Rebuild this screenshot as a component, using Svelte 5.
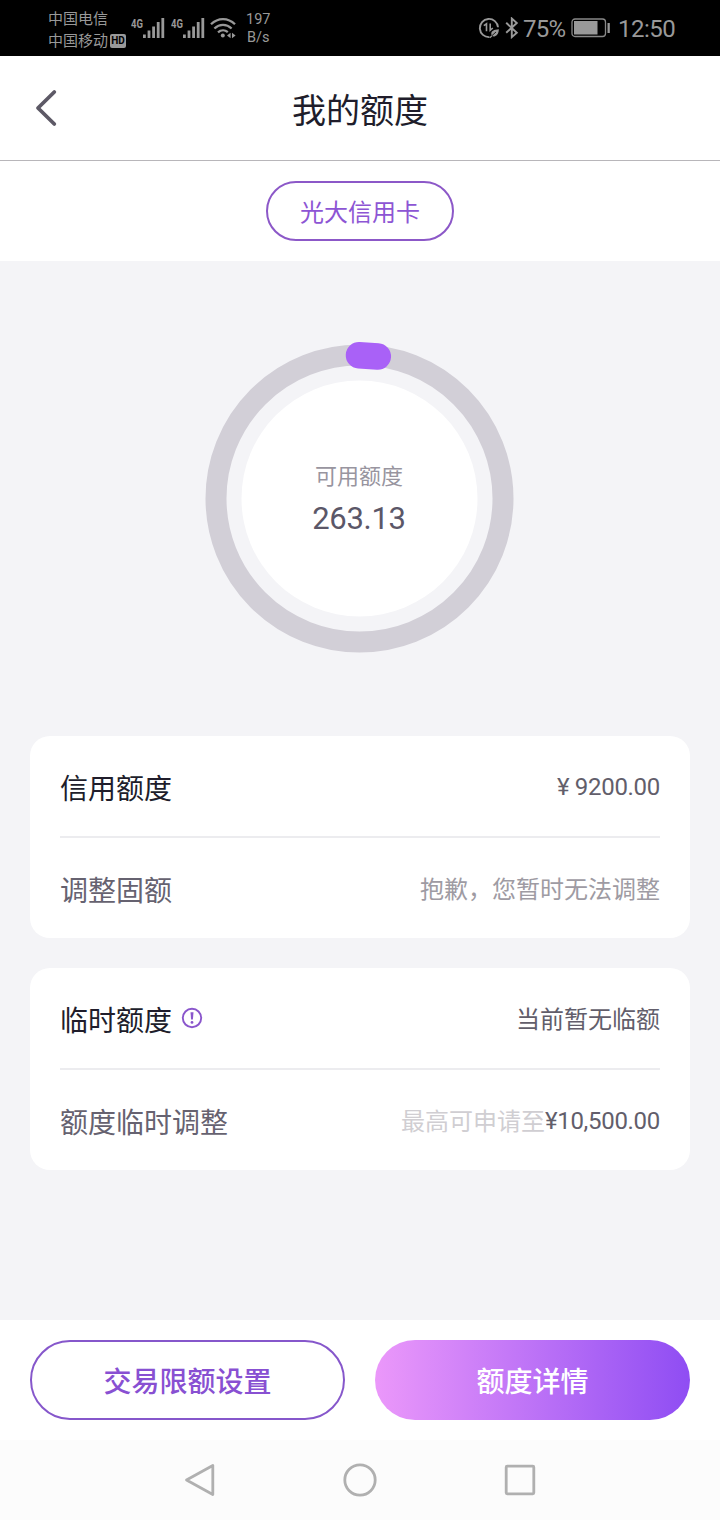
<script>
  const groups = [
    [
      { label: '信用额度', strong: true, value: '¥ 9200.00', numeric: true },
      { label: '调整固额', value: '抱歉，您暂时无法调整', tone: 'muted' }
    ],
    [
      { label: '临时额度', strong: true, info: true, value: '当前暂无临额' },
      { label: '额度临时调整', hint: '最高可申请至', value: '¥10,500.00', numeric: true }
    ]
  ];
  const sims = [0, 1];
</script>

<div class="screen">
  <div class="status">
    <div class="carriers">
      <div>中国电信</div>
      <div>中国移动<span class="hd">HD</span></div>
    </div>
    {#each sims as sim}
      <div class="sim">
        <span class="gen">4G</span>
        <svg width="22" height="21" viewBox="0 0 22 21" fill="#999">
          <rect x="0" y="16.500" width="2.800" height="3.500" />
          <rect x="4.600" y="12.500" width="2.800" height="7.500" />
          <rect x="9.200" y="8.500" width="2.800" height="11.500" />
          <rect x="13.800" y="4" width="2.800" height="16" />
          <rect x="18.400" y="0" width="2.800" height="20" />
        </svg>
      </div>
    {/each}
    <svg class="wifi" width="26" height="22" viewBox="0 0 26 22" fill="none" stroke="#999" stroke-width="2.3">
      <path d="M1 7.2C8 .3 18 .3 25 7.2" />
      <path d="M4.400 11.500C9.500 6.700 16.500 6.700 21.600 11.500" />
      <path d="M8 15.400c3-2.600 7-2.600 9.800-.3" />
      <circle cx="12.800" cy="18.500" r="2" fill="#999" stroke="none" />
      <path d="M20.600 15.800v5.400L17 18.500zM22 15.800v5.400l3.600-2.700z" fill="#999" stroke="none" />
    </svg>
    <div class="speed"><div>197</div><div class="unit">B/s</div></div>
    <div class="right">
      <svg width="22" height="22" viewBox="0 0 22 22" fill="none" stroke="#999" stroke-width="1.900">
        <path d="M11.500 20.100A9.100 9.100 0 1 1 20 10.300" />
        <path d="M5.800 8.600l2.700-1.800v7.400M12.200 6.500v6.800l2.600-2.300" stroke-width="1.600" />
        <path d="M20.900 12.200c-5 .3-7.800 1.800-7.600 4.900.1 2 1.900 2.900 3.700 2.200 2.700-1 3.700-3.300 3.900-7.100z" fill="#999" stroke="none" />
        <path d="M13 19.500l5-4.500" stroke="#000" stroke-width=".8" />
        <path d="M11.800 20.800l2.200-2" stroke-width="1.200" />
      </svg>
      <svg class="bt" width="14" height="22" viewBox="0 0 14 22" fill="none" stroke="#999" stroke-width="1.900">
        <path d="M1.200 5.800l10.600 10-5 4.300V1.500l5 4.500-10.600 9.800" />
      </svg>
      <span class="pct">75%</span>
      <svg class="battery" width="40" height="20" viewBox="0 0 40 20">
        <rect x="1" y="1" width="33.500" height="17.500" rx="3" fill="none" stroke="#888" stroke-width="1.300" />
        <rect x="3" y="3" width="23.500" height="13.500" fill="#999" />
        <rect x="36.500" y="5" width="2.300" height="10" fill="#999" />
      </svg>
      <span class="clock">12:50</span>
    </div>
  </div>

  <header>
    <svg class="back" width="24" height="40" viewBox="0 0 24 40" fill="none" stroke="#5d5966" stroke-width="3.800" stroke-linecap="round" stroke-linejoin="round">
      <path d="M20.300 4L4 20l16.300 16" />
    </svg>
    <h1>我的额度</h1>
  </header>

  <div class="tabs"><button class="card-tab">光大信用卡</button></div>

  <main>
    <div class="gauge">
      <svg width="310" height="314" viewBox="0 0 310 314" fill="none">
        <circle cx="154.500" cy="157.500" r="143.500" stroke="#d2cfd7" stroke-width="21" />
        <circle cx="154.500" cy="157.500" r="118" fill="#fff" />
        <path d="M154 14.300L172.800 15.500" stroke="#a961f7" stroke-width="26.500" stroke-linecap="round" />
      </svg>
      <div class="reading">
        <span>可用额度</span>
        <strong>263.13</strong>
      </div>
    </div>

    {#each groups as rows}
      <section>
        {#each rows as row}
          <div class="row">
            <span class="label" class:dark={row.strong}>{row.label}</span>
            {#if row.info}
              <svg class="info" width="22" height="22" viewBox="0 0 22 22">
                <circle cx="11" cy="11" r="9.200" fill="none" stroke="#8a56cc" stroke-width="1.900" />
                <path d="M9.500 5.300h3l-.6 7.200h-1.800z" fill="#8a56cc" />
                <circle cx="11" cy="15.400" r="1.400" fill="#8a56cc" />
              </svg>
            {/if}
            <span class="value {row.tone ?? ''}" class:numeric={row.numeric}>{#if row.hint}<span class="hint">{row.hint}</span>{/if}{row.value}</span>
          </div>
        {/each}
      </section>
    {/each}
  </main>

  <div class="actions">
    <button class="outline">交易限额设置</button>
    <button class="filled">额度详情</button>
  </div>

  <nav>
    <svg width="34" height="36" viewBox="0 0 34 36"><path d="M29.800 3.500v29L3.500 18z" /></svg>
    <svg width="34" height="36" viewBox="0 0 34 36"><circle cx="17" cy="18" r="15.200" /></svg>
    <svg width="34" height="36" viewBox="0 0 34 36"><rect x="3.200" y="4.200" width="27.600" height="27.600" rx="1" /></svg>
  </nav>
</div>

<style>
  :global(body) { margin: 0; }
  * { box-sizing: border-box; }
  svg { display: block; flex: none; }
  button { font: inherit; padding: 0; background: none; border: 0; }
  .screen {
    width: 720px; height: 1520px; display: flex; flex-direction: column;
    background: #f4f4f7; overflow: hidden;
    font-family: Roboto, "Noto Sans CJK SC", sans-serif;
  }
  .status {
    height: 56px; flex: none; background: #000; color: #999;
    display: flex; align-items: center; padding: 0 44px 0 48px;
  }
  .carriers { width: 83px; font-size: 15px; line-height: 22px; padding-top: 3px; }
  .carriers div { display: flex; align-items: center; white-space: nowrap; }
  .hd {
    margin-left: 2px; width: 16px; height: 14px; border-radius: 2px;
    background: #999; color: #000; font-size: 10px; line-height: 14px; font-weight: 700; text-align: center;
  }
  .sim { width: 40px; display: flex; align-items: flex-start; }
  .gen { width: 12px; font-size: 12.500px; line-height: 11px; font-weight: 700; transform: scaleX(.76); transform-origin: left; }
  .wifi { margin-left: -1px; }
  .speed { margin-left: 10px; font-size: 14.500px; line-height: 18px; padding-top: 2px; }
  .unit { text-align: center; }
  .right { margin-left: auto; display: flex; align-items: center; font-size: 24px; line-height: 28px; padding-top: 2px; }
  .right svg { margin-top: -2px; }
  .bt { margin-left: 5px; }
  .pct { margin-left: 4px; width: 44px; letter-spacing: -0.8px; }
  .battery { margin-left: 4px; }
  .clock { margin-left: 7px; width: 58px; letter-spacing: -0.5px; }

  header {
    height: 105px; flex: none; background: #fff; border-bottom: 1px solid #b8b6ba;
    display: grid; grid-template-columns: 100px 1fr 100px; align-items: center;
  }
  .back { margin-left: 34px; }
  h1 { margin: 5px 0 0; font-size: 34px; line-height: 48px; font-weight: 400; color: #201d2b; text-align: center; }
  .tabs { height: 100px; flex: none; background: #fff; display: flex; justify-content: center; align-items: center; }
  .card-tab { width: 188px; height: 60px; border: 2px solid #8c58c8; border-radius: 30px; color: #8d55d4; font-size: 24px; line-height: 34px; padding-top: 4px; }

  main { flex: 1; padding: 80px 30px 0; }
  .gauge { display: grid; justify-content: center; margin-bottom: 81px; }
  .gauge > * { grid-area: 1 / 1; }
  .reading { display: flex; flex-direction: column; align-items: center; padding: 120px 2px 0 0; }
  .reading span { font-size: 22px; line-height: 32px; color: #98959f; }
  .reading strong { font-size: 31px; line-height: 40px; margin-top: 6px; font-weight: 400; color: #5b5768; letter-spacing: -0.3px; }

  section { background: #fff; border-radius: 20px; padding: 0 30px; margin-bottom: 30px; }
  .row { height: 100px; display: flex; align-items: center; }
  .row:first-child { height: 102px; border-bottom: 2px solid #ececef; }
  .label { font-size: 28px; line-height: 40px; color: #666270; padding-top: 7px; }
  .label.dark { color: #201d2b; }
  .info { margin-left: 9px; }
  .value { margin-left: auto; font-size: 24px; line-height: 36px; color: #625e6b; padding-top: 4px; }
  .value.numeric { letter-spacing: -0.300px; padding-top: 2px; }
  .muted { color: #9e9ba3; }
  .value .hint { color: #d0ced2; letter-spacing: 0; position: relative; top: 1px; }

  .actions { height: 120px; flex: none; background: #fff; display: grid; grid-template-columns: 1fr 1fr; gap: 30px; padding: 20px 30px; }
  .actions button { height: 80px; border-radius: 40px; font-size: 28px; line-height: 40px; font-weight: 500; padding-top: 6px; }
  .actions .outline { border: 2px solid #8657cb; color: #8850d2; }
  .actions .filled { color: #fff; background: linear-gradient(90deg, #eb98fa, #8f4df3); }
  nav { height: 80px; flex: none; background: #fcfcfc; display: flex; justify-content: center; align-items: center; gap: 126px; }
  nav path, nav circle, nav rect { fill: none; stroke: #b0b0b0; stroke-width: 2.800; stroke-linejoin: round; }
</style>
